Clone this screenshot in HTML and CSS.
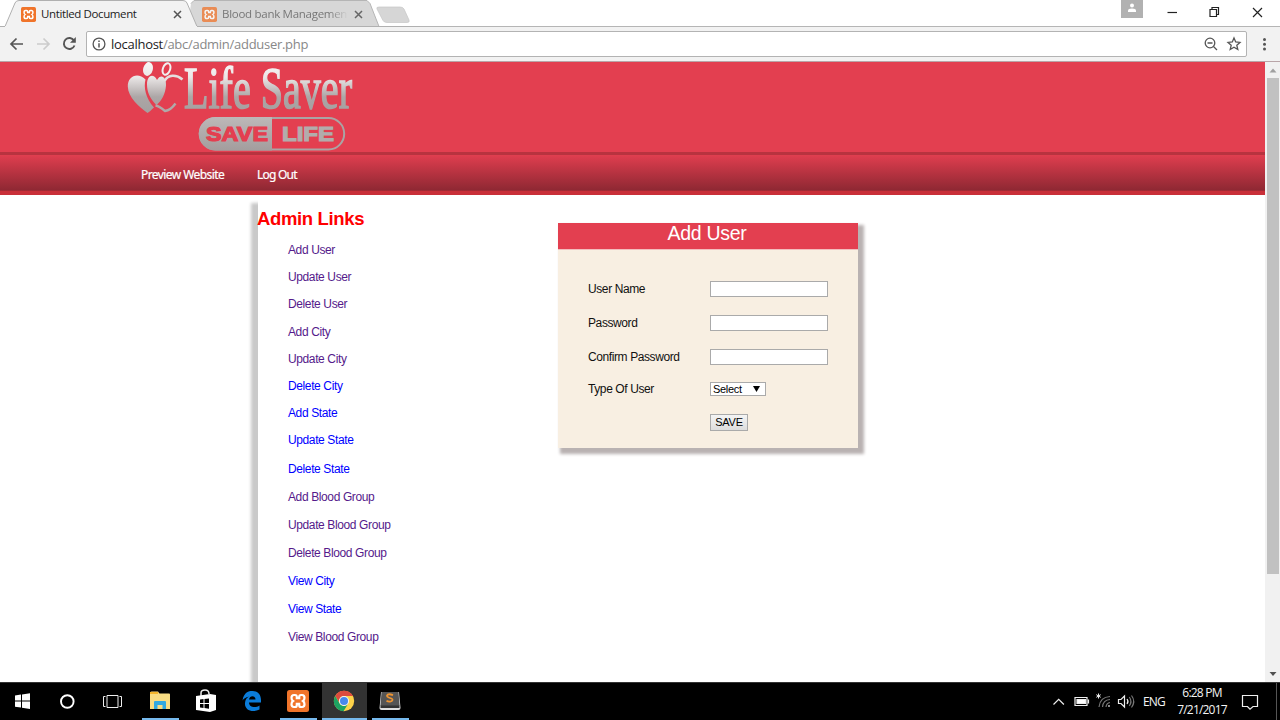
FILE: index.html
```html
<!DOCTYPE html>
<html lang="en">
<head>
<meta charset="utf-8">
<title>Untitled Document</title>
<link rel="stylesheet" href="styles.css">
</head>
<body>
<svg class="defs" width="0" height="0" aria-hidden="true">
  <defs>
    <symbol id="xampp" viewBox="0 0 22 22">
      <rect width="22" height="22" rx="2.500" fill="#f0742a"/>
      <path d="M7 5h1q1.800 0 1.800 1.800v1.400h2.400V6.800Q12.200 5 14 5h1q2.500 0 2.500 2.700 0 2.300-1.500 3.300 1.500 1 1.500 3.300Q17.500 17 15 17h-1q-1.800 0-1.800-1.800v-1.400H9.800v1.400Q9.800 17 8 17H7q-2.500 0-2.500-2.700Q4.500 12 6 11 4.500 10 4.500 7.700 4.500 5 7 5z" fill="none" stroke="#fff" stroke-width="2.200"/>
    </symbol>
    <linearGradient id="silver" x1="0" y1="62" x2="0" y2="112" gradientUnits="userSpaceOnUse">
      <stop offset="0" stop-color="#f8f6f6"/><stop offset=".3" stop-color="#ebe7e7"/><stop offset=".7" stop-color="#aca6a6"/><stop offset="1" stop-color="#a5a0a0"/>
    </linearGradient>
    <linearGradient id="badge" x1="0" y1="0" x2="0" y2="1">
      <stop offset="0" stop-color="#bdb8b8"/><stop offset="1" stop-color="#a39d9d"/>
    </linearGradient>
  </defs>
</svg>
<div class="screen">
  <div class="tabstrip">
    <svg class="tabshapes" width="420" height="27" viewBox="0 0 420 27">
      <path d="M191 3.500 194 .5H367l3 3 9 23H188" fill="#d7d7d7" stroke="#b5b5b5"/>
      <path d="M0 26.500H5L15 3Q16 .5 19 .5H183q3 0 4 2.500L197 26.500" fill="#f2f2f2" stroke="#b0b0b0"/>
      <path d="M5 26.500H197" stroke="#f2f2f2"/>
      <path d="M197 26.500H420" stroke="#b0b0b0"/>
      <path d="M379 7H400q3 0 4 2l5 11q1 2.500-2 2.500H387q-3 0-4-2L377 9q-1-2 2-2z" fill="#d6d6d6" stroke="#c6c6c6" stroke-width=".7"/>
    </svg>
    <div class="tab">
      <svg class="favicon" width="15" height="15"><use href="#xampp"/></svg>
      <span class="tabtitle first">Untitled Document</span>
      <svg class="close" width="9" height="9" viewBox="0 0 9 9"><path d="M1 1l7 7M8 1l-7 7" stroke="#555" stroke-width="1.500"/></svg>
    </div>
    <div class="tab inactive">
      <svg class="favicon" width="15" height="15"><use href="#xampp"/></svg>
      <span class="tabtitle second">Blood bank Management</span>
      <svg class="close" width="9" height="9" viewBox="0 0 9 9"><path d="M1 1l7 7M8 1l-7 7" stroke="#666" stroke-width="1.500"/></svg>
    </div>
    <div class="winctl">
      <div class="profile"><svg width="10" height="10" viewBox="0 0 10 10"><circle cx="5" cy="2.500" r="2" fill="#fff"/><path d="M1 9V7.500Q1 5.500 5 5.500T9 7.500V9z" fill="#fff"/></svg></div>
      <svg width="130" height="26" viewBox="6 0 130 26" fill="none" stroke="#222" stroke-width="1.200"><path d="M23.500 12.500H33"/><path d="M66 9.500h6.500V16.500H66zM68 9.500V7.500H74.500V14.500H72.500"/><path d="M109 8l9 9M118 8l-9 9"/></svg>
    </div>
  </div>
  <div class="toolbar">
    <svg width="86" height="34" viewBox="0 0 86 34" fill="none" stroke-width="1.700">
      <path d="M23 17H11M16.500 11.500 11 17l5.500 5.500" stroke="#555"/>
      <path d="M37 17H49M43.500 11.500 49 17l-5.500 5.500" stroke="#ccc"/>
      <path d="M74 13.500A5.500 5.500 0 1 0 74.500 18.500" stroke="#555" stroke-width="1.900"/><path d="M75.800 10v5.700H70z" fill="#555"/>
    </svg>
    <div class="omnibox">
      <svg width="14" height="14" viewBox="0 0 14 14" fill="none" stroke="#555" stroke-width="1.300"><circle cx="7" cy="7" r="5.900"/><path d="M7 6.200V10.500M7 3.500V5" stroke-width="1.500"/></svg>
      <span class="url"><b>localhost</b>/abc/admin/adduser.php</span>
      <svg class="omniicons" width="44" height="24" viewBox="0 0 44 24" fill="none" stroke="#555" stroke-width="1.300"><circle cx="11" cy="11" r="4.800"/><path d="M14.500 14.500 18 18M8.500 11h5"/><path d="M35 6l1.700 4 4.300.4-3.200 2.900 1 4.200L35 15.200l-3.800 2.300 1-4.200L29 10.400l4.300-.4z"/></svg>
    </div>
    <svg width="33" height="34" viewBox="0 0 33 34" fill="#555"><circle cx="17.500" cy="12.500" r="1.500"/><circle cx="17.500" cy="17.300" r="1.500"/><circle cx="17.500" cy="22.100" r="1.500"/></svg>
  </div>
  <div class="viewport">
    <div class="page">
      <div class="banner">
        <svg width="240" height="90" viewBox="120 62 240 90">
          <g fill="url(#silver)">
            <ellipse cx="148" cy="69" rx="4.800" ry="7" transform="rotate(14 148 69)"/>
            <path d="M147.500 113C139 107 128 97 127.800 86.500 127.500 76 138 71.500 145.500 79.500 143.500 87 145.500 98 154 107.500 151.500 109.500 149.500 112 147.500 113z"/>
            <path d="M156.500 105C150 99 147 92 147 84.500 147 75 153.500 73 157 80 161 73 166.500 77 166 85.500 165.500 94 161.500 101 156.500 105z"/>
          </g>
          <ellipse cx="166.500" cy="69" rx="3.600" ry="6" transform="rotate(20 166.500 69)" fill="none" stroke="#f2efef" stroke-width="2"/>
          <path d="M164.500 81C168 74.500 176 74 182.500 79.500" fill="none" stroke="#e4dfdf" stroke-width="2.600"/>
          <path d="M155.500 105.500C159 106 162 108.500 165 111 169.500 110.500 173 107 175.500 103.500" fill="none" stroke="#b0a9a9" stroke-width="2.400"/>
          <text class="logotext" x="184" y="108" textLength="168" lengthAdjust="spacingAndGlyphs" fill="url(#silver)" stroke="url(#silver)">Life Saver</text>
          <rect x="199.700" y="118" width="144.500" height="31.500" rx="15.700" fill="none" stroke="#aaa4a4" stroke-width="2"/>
          <path d="M272 117H215.500a16.500 16.500 0 0 0 0 33.500H272z" fill="url(#badge)"/>
          <text class="badgetext" x="206" y="141" textLength="62" lengthAdjust="spacingAndGlyphs" fill="#e33f50" stroke="#e33f50">SAVE</text>
          <text class="badgetext" x="282" y="141" textLength="52" lengthAdjust="spacingAndGlyphs" fill="#b2acac" stroke="#b2acac">LIFE</text>
        </svg>
      </div>
      <div class="nav"><a class="preview">Preview Website</a><a class="logout">Log Out</a></div>
      <div class="content">
        <div class="sidebar">
          <h2>Admin Links</h2>
          <ul>
            <li>Add User</li><li>Update User</li><li>Delete User</li><li>Add City</li><li>Update City</li>
            <li class="new">Delete City</li><li class="new">Add State</li><li class="new">Update State</li>
          </ul>
          <ul class="loose">
            <li class="new">Delete State</li><li>Add Blood Group</li><li>Update Blood Group</li><li>Delete Blood Group</li>
            <li class="new">View City</li><li class="new">View State</li><li>View Blood Group</li>
          </ul>
        </div>
        <form class="card">
          <h3>Add User</h3>
          <div class="fields">
            <label>User Name</label><span class="field"></span>
            <label>Password</label><span class="field"></span>
            <label>Confirm Password</label><span class="field"></span>
            <label>Type Of User</label><span class="select"><span>Select</span><svg width="7" height="6" viewBox="0 0 7 6"><path d="M0 0h7L3.500 6z" fill="#000"/></svg></span>
            <span></span><span class="save">SAVE</span>
          </div>
        </form>
      </div>
    </div>
    <div class="scrollbar">
      <svg width="15" height="16" viewBox="0 0 15 16"><path d="M4.500 10.500 8 6.500l3.500 4z" fill="#a0a0a0"/></svg>
      <div class="thumb"></div>
      <svg class="down" width="15" height="16" viewBox="0 0 15 16"><path d="M4.500 6h7L8 10z" fill="#505050"/></svg>
    </div>
  </div>
  <div class="taskbar">
    <div class="sys"><svg width="45" height="38" viewBox="0 0 45 38" fill="#fff"><path d="M15 13.500l6-.9v6H15zM22 12.400l8-1.200v7.400H22zM15 19.600h6v6l-6-.9zM22 19.600h8V27l-8-1.200z"/></svg></div>
    <div class="sys"><svg width="45" height="38" viewBox="0 0 45 38"><circle cx="22.300" cy="19.500" r="6.300" fill="none" stroke="#fff" stroke-width="1.900"/></svg></div>
    <div class="sys gap"><svg width="45" height="38" viewBox="0 0 45 38" fill="none" stroke="#eee"><path d="M17 13.500H28V25.500H17zM15.500 14.500h-2v10h2M29.500 14.500h2v10h-2"/></svg></div>
    <div class="app open"><svg width="22" height="20" viewBox="0 0 22 20"><path d="M1 2q0-1.500 1.500-1.500H9l1.500 2H20q1 0 1 1V18H1z" fill="#f8dc82"/><path d="M1 2h8" stroke="#f3b52c" stroke-width="2"/><path d="M5 18v-7q0-1 1-1H16q1 0 1 1v7h-3.500v-4h-5v4z" fill="#31a8e0"/></svg></div>
    <div class="app"><svg width="22" height="24" viewBox="0 0 22 24"><path d="M6 7V4q0-3 4-3t4 4" fill="none" stroke="#eee" stroke-width="1.500"/><path d="M1 7l14-2 6 1v15l-6 2-14-2z" fill="#fff"/><path d="M5 10.500l3.500-.4v4H5zM9.500 10l4.500-.6v4.700H9.500zM5 15h3.500v4L5 18.600zM9.500 15H14v4.700l-4.500-.6z" fill="#000"/></svg></div>
    <div class="app"><svg width="20" height="20" viewBox="0 0 20 20"><path d="M.5 9.500C2-.5 9 0 10.500 0 16 0 19 4 19 9v2.500H7c.2 5.500 7 5.500 10.500 3V18.500C10 22 2.500 19 3 12 3.200 8.500 5 6.500 7 5.500 3.500 6 1.500 8 .5 9.500zM7 8.500h6.500c0-4.500-6-4.500-6.500 0z" fill="#0b7cd9"/></svg></div>
    <div class="app open"><svg width="22" height="22"><use href="#xampp"/></svg></div>
    <div class="app open active"><svg width="22" height="22" viewBox="0 0 22 22"><circle cx="11" cy="11" r="10.200" fill="#fdd249"/><path d="M2.200 5.900A10.200 10.200 0 0 1 20 6H11a5 5 0 0 0-4.700 6.500z" fill="#dd4b3e"/><path d="M2.200 5.900A10.200 10.200 0 0 0 10.500 21.200L15 14a5 5 0 0 1-8.300-.5z" fill="#1da362"/><circle cx="11" cy="11" r="5" fill="#f5f5f5"/><circle cx="11" cy="11" r="4" fill="#4788ec"/></svg></div>
    <div class="app open"><svg width="22" height="20" viewBox="0 0 22 20"><path d="M2 1h18l1.500 16q0 2-2 2h-17q-2 0-2-2z" fill="#ddd"/><path d="M2.500 1h17l1 14h-19z" fill="#555"/><path d="M1.500 14.500h19v2.500h-19z" fill="#333"/><path d="M14 4.200q-5-2-6 .3c-.5 3 6 2 5.500 4.500-.5 2-4 2-6 .8" fill="none" stroke="#ee9431" stroke-width="1.800"/></svg></div>
    <div class="tray">
      <svg width="90" height="38" viewBox="1050 682 90 38" fill="none" stroke="#eee" stroke-width="1.200">
        <path d="M1053.500 704.500l5.200-5.200 5.200 5.200"/>
        <path d="M1075 697.500h12v8h-12zM1088.500 699.500v4"/><path d="M1077 699.500h8.500v4H1077z" fill="#fff"/>
        <path d="M1098.500 693.500v5M1096.300 694.700l4.400 2.600M1100.700 694.700l-4.400 2.600" stroke-width="1"/>
        <path d="M1099 707q1-10 11-10.500M1102.500 707q.5-7 7.500-7.500M1106 707q.5-4 4-4.500" stroke="#777"/><circle cx="1109" cy="706" r="1" fill="#bbb" stroke="none"/>
        <path d="M1118.500 699.500h2.500l3.500-3.500v11l-3.500-3.500h-2.500z"/><path d="M1127 699q2 2.500 0 5"/><path d="M1129.300 697q3.300 4.500 0 9M1131.500 695.500q4.500 6 0 12" stroke="#777"/>
      </svg>
      <span class="lang">ENG</span>
      <div class="clock"><span class="time">6:28 PM</span><span class="date">7/21/2017</span></div>
      <svg class="note" width="18" height="18" viewBox="0 0 18 18" fill="none" stroke="#eee" stroke-width="1.200"><path d="M1.500 2.500h15v11h-4.500L9 16.200 6.500 13.500h-5z"/></svg>
    </div>
    <div class="peek"></div>
  </div>
</div>
</body>
</html>
```
FILE: styles.css
```css
* { box-sizing: border-box; }
body { margin: 0; font-family: "Liberation Sans", Arial, sans-serif; }
svg { display: block; flex: none; }
.defs { position: absolute; }
.screen { width: 1280px; height: 720px; display: grid; grid-template-rows: 27px 35px 620px 38px; overflow: hidden; background: #fff; }

.tabstrip { position: relative; display: flex; background: #fff; border-bottom: 1px solid #b5b5b5; font: 12px "Open Sans", sans-serif; }
.tabshapes { position: absolute; left: 0; top: 0; }
.tab { position: relative; width: 181px; height: 27px; display: flex; align-items: center; padding: 1px 0 0 21px; color: #222; }
.tab .close { margin-left: auto; margin-right: -1px; }
.inactive { color: #777; }
.inactive .favicon { opacity: .75; }
.tabtitle { margin-left: 5px; white-space: nowrap; line-height: 20px; font-size: 11.500px; }
.first { letter-spacing: -.38px; }
.second { width: 126px; letter-spacing: -.28px; -webkit-mask-image: linear-gradient(90deg, #000 85%, transparent); mask-image: linear-gradient(90deg, #000 85%, transparent); }
.winctl { margin-left: auto; display: flex; }
.profile { width: 22px; height: 18px; background: #b1b1b1; padding: 3px 6px; margin-right: 7px; }

.toolbar { display: flex; background: #f2f2f2; border-bottom: 1px solid #b9a5a8; }
.omnibox { flex: 1; height: 26px; margin-top: 4px; border: 1px solid #b3b3b3; border-radius: 2px; background: #fff; display: flex; align-items: center; padding-left: 5px; }
.url { margin-left: 5px; font: 13px/20px "Open Sans", sans-serif; color: #888; letter-spacing: -.28px; }
.url b { font-weight: 400; color: #222; }
.omniicons { margin-left: auto; margin-right: 3px; }

.viewport { display: flex; background: #fff; }
.page { width: 1265px; display: flex; flex-direction: column; overflow: hidden; }
.banner { height: 90px; background: #e33f50; padding-left: 120px; }
.logotext { font: 59px "Liberation Serif", serif; stroke-width: 1.600px; }
.badgetext { font: bold 21px "Liberation Sans", sans-serif; stroke-width: 1.200px; }
.nav { height: 43px; display: flex; border-top: 3px solid #b8333f; border-bottom: 4px solid #c92f39; background: linear-gradient(#e03e4f, #8f2833 97%, #b02b36); color: #fff; font: 12px/39px "Noto Sans", sans-serif; padding-left: 141px; -webkit-text-stroke: .2px #fff; }
.preview { width: 116px; letter-spacing: -.58px; }
.logout { letter-spacing: -.78px; }
.content { flex: 1; display: flex; align-items: flex-start; }
.sidebar { width: 240px; height: 500px; margin: 2px 0 0 258px; box-shadow: -6px 7px 3px 1px #c9c9c9; background: #fff; }
.sidebar h2 { margin: 0 0 0 -1px; padding-top: 10px; font: bold 18.500px/24px "Liberation Sans", sans-serif; color: #f00; letter-spacing: -.35px; }
ul { list-style: none; margin: 0; padding: 6px 0 0 30px; font-size: 12px; letter-spacing: -.38px; color: #551a8b; }
li { height: 27.200px; line-height: 27.200px; }
.loose { padding-top: 0; }
.loose li { height: 28.100px; line-height: 28.100px; }
.new { color: #00f; }

.card { width: 300px; height: 225px; margin: 28px 0 0 60px; background: #f8efe2; box-shadow: 4px 4px 3px 2px #b9b2b2; }
.card h3 { margin: 0; height: 27px; background: #e33f50; border-bottom: 1px solid #f3bdbd; color: #fff; text-align: center; font: 19.500px/21px "Liberation Sans", sans-serif; letter-spacing: -.3px; padding-right: 2px; }
.fields { display: grid; grid-template-columns: 122px 118px; grid-template-rows: 34px 34px 33px 32.500px 33px; align-items: center; padding: 22px 0 0 30px; font-size: 12px; color: #111; }
.fields label { letter-spacing: -.4px; }
.field { height: 16px; border: 1px solid #aaa; background: #fff; }
.select { width: 56px; height: 14px; border: 1px solid #aaa; background: #fff; display: flex; align-items: center; justify-content: space-between; padding: 0 5px 0 2px; font-size: 11px; letter-spacing: -.3px; line-height: 12px; color: #000; }
.save { width: 38px; height: 17px; border: 1px solid #aaa; background: linear-gradient(#f4f4f4, #ddd); font-size: 11px; letter-spacing: -.2px; line-height: 15px; text-align: center; color: #000; }

.scrollbar { width: 15px; background: #f1f1f1; display: flex; flex-direction: column; }
.thumb { width: 12px; height: 496px; margin-left: 2px; background: #c1c1c1; }
.down { margin-top: auto; }

.taskbar { display: flex; background: #000; border-top: 1px solid #333; }
.sys { width: 45px; margin-top: -1px; }
.gap { margin-right: 2px; }
.app { width: 46px; display: flex; align-items: center; justify-content: center; border-bottom: 2px solid transparent; position: relative; }
.open::after { content: ""; position: absolute; left: 5px; right: 4px; bottom: -2px; height: 2px; background: #76b9ed; }
.active { background: linear-gradient(90deg, #000 1px, #333 1px); }
.active::after { left: 1px; right: 0; }
.tray { margin-left: auto; width: 226px; display: flex; color: #f4f4f4; font: 12px/17px "Open Sans", sans-serif; }
.tray > svg:first-child { margin-top: -1px; }
.lang { margin: 10px 0 0 3px; width: 24px; letter-spacing: -.9px; }
.clock { width: 60px; margin: 1px 0 0 5px; display: flex; flex-direction: column; align-items: center; }
.time, .date { letter-spacing: -.8px; }
.note { margin: 10px 0 0 9px; }
.peek { width: 4px; border-left: 1px solid #555; }
```
